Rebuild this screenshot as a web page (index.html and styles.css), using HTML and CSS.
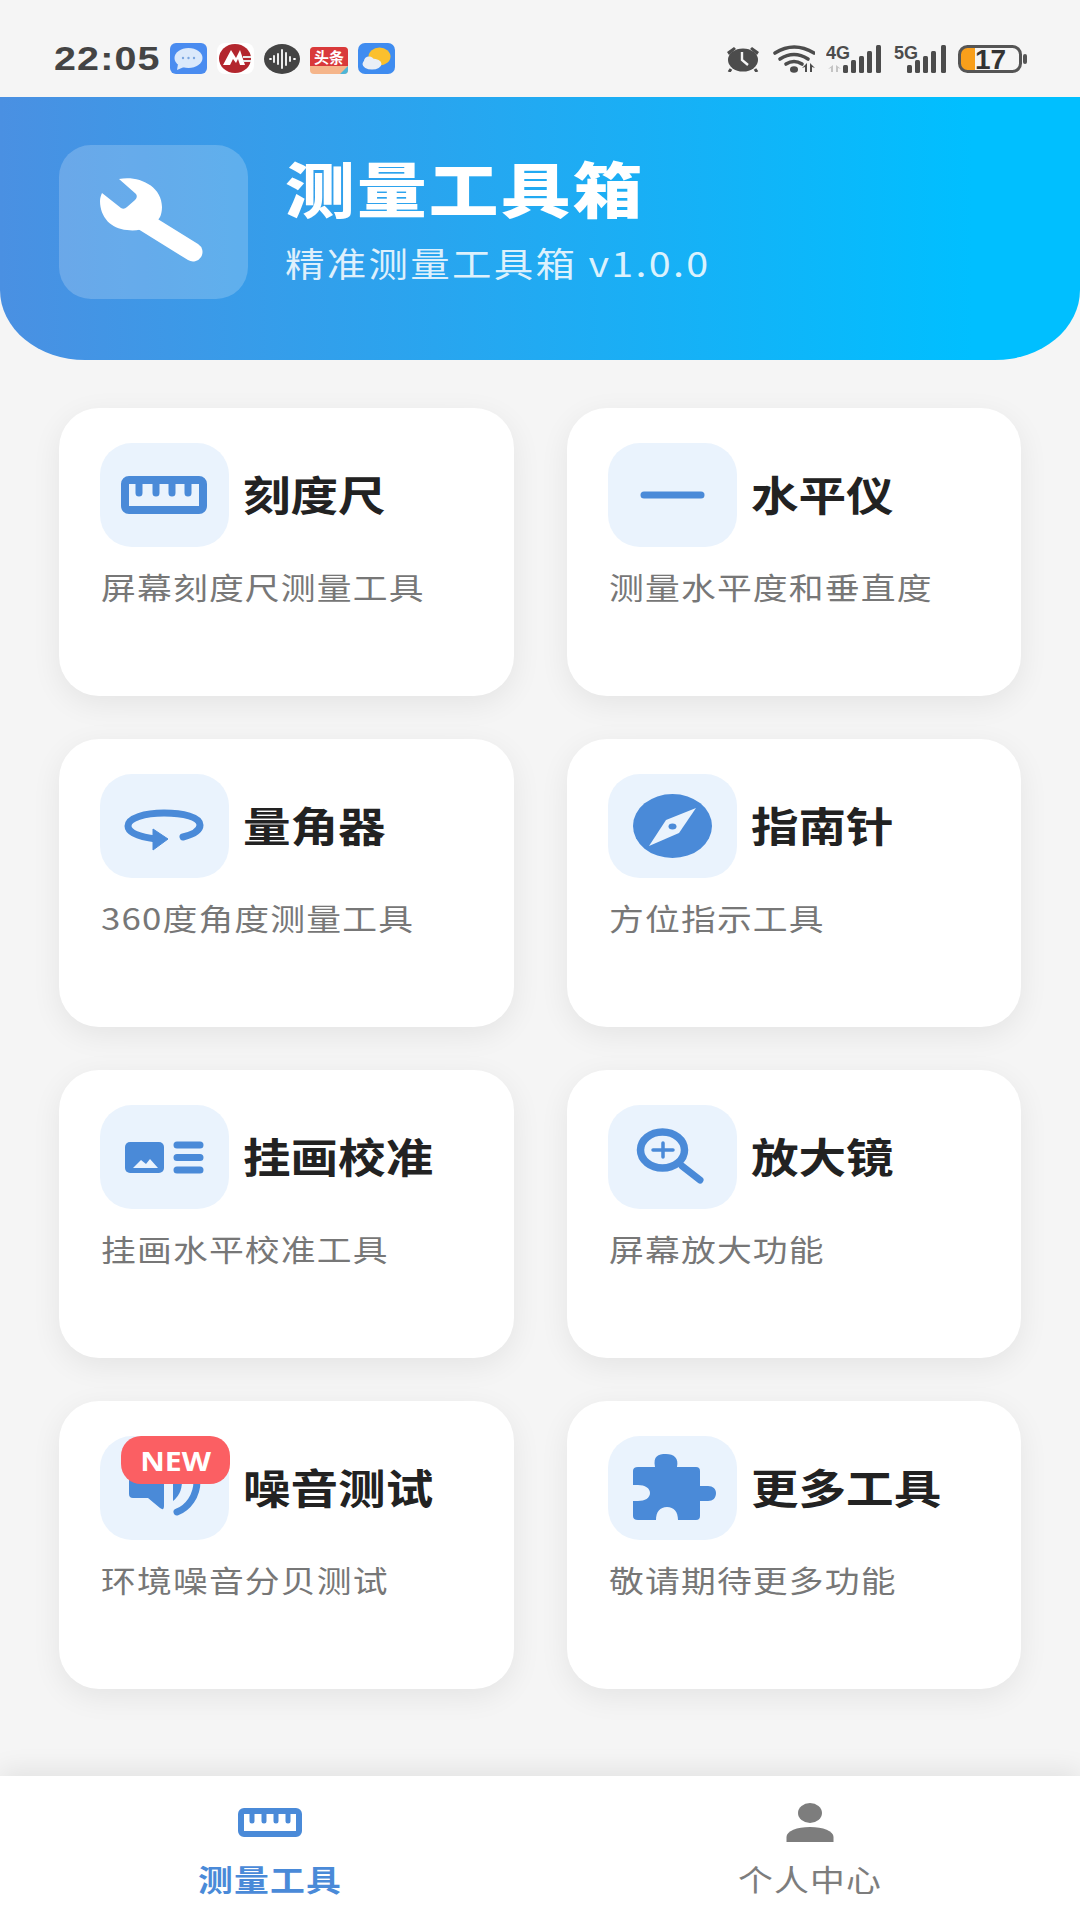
FILE: index.html
```html
<!DOCTYPE html>
<html lang="zh-CN">
<head>
    <meta charset="UTF-8">
    <meta name="viewport" content="width=device-width, initial-scale=1.0">
    <title>测量工具箱</title>
    <link rel="stylesheet" href="styles.css">
</head>
<body>
<div class="app">

    <div class="status-bar">
        <div class="status-left">
            <span class="time stretch">22:05</span>
            <div class="app-icons">
                <svg width="37" height="31" viewBox="0 0 37 31"><rect width="37" height="31" rx="6" fill="#4a8cf0"/><ellipse cx="18.5" cy="15" rx="14" ry="10" fill="#dbe9fb"/><path d="M8 21l-1 6 7-3z" fill="#dbe9fb"/><circle cx="13" cy="15" r="1.2" fill="#7ba6e0"/><circle cx="18.5" cy="15" r="1.2" fill="#7ba6e0"/><circle cx="24" cy="15" r="1.2" fill="#7ba6e0"/></svg>
                <svg width="37" height="31" viewBox="0 0 37 31"><rect width="37" height="31" rx="8" fill="#fff"/><ellipse cx="18" cy="15.5" rx="16" ry="14.5" fill="#b3262e"/><path d="M6 22L14 7l5 8 4-8 5 15h-5l-2-6-2 4-3-4-3 6z" fill="#fff"/><path d="M26 13h8v2h-8zM26 17h8v2h-8z" fill="#e8e8e8"/></svg>
                <svg width="36" height="30" viewBox="0 0 36 30"><ellipse cx="18" cy="15" rx="18" ry="15" fill="#444"/><path d="M6 15h1M10 12v6M14 10v10M18 6v18M22 9v12M26 13v4M30 15h1" stroke="#fff" stroke-width="1.8" stroke-linecap="round"/></svg>
                <svg width="38" height="31" viewBox="0 0 38 31"><rect y="4" width="38" height="27" rx="4" fill="#f5b58a"/><path d="M0 8q0-4 4-4h30q4 0 4 4v15H0z" fill="#d9393a"/><text x="19" y="20" class="toutiao">头条</text><path d="M30 31l8-8v4q0 4-4 4z" fill="#4db6d8"/></svg>
                <svg width="37" height="31" viewBox="0 0 37 31"><rect width="37" height="31" rx="7" fill="#3f8cf0"/><ellipse cx="21.5" cy="13.5" rx="11" ry="9" fill="#fbc02d"/><ellipse cx="14" cy="21" rx="9.5" ry="5.5" fill="#e9eef6"/><ellipse cx="11" cy="18" rx="5" ry="4.5" fill="#e9eef6"/></svg>
            </div>
        </div>
        <div class="status-right">
            <svg width="34" height="27" viewBox="0 0 34 27"><ellipse cx="17" cy="15" rx="15" ry="11.500" fill="#4c4c4c"/><path d="M1 7l7-5 2 2-7 6zM33 7l-7-5-2 2 7 6z" fill="#4c4c4c"/><path d="M5 24l-2 3M29 24l2 3" stroke="#4c4c4c" stroke-width="3"/><path d="M16 7v8l6 5" fill="none" stroke="#f5f5f5" stroke-width="2.4"/></svg>
            <svg width="44" height="28" viewBox="-2 0 44 28"><g fill="none" stroke="#4c4c4c" stroke-width="3.6" stroke-linecap="round"><path d="M2 8Q21-4 41 8"/><path d="M7 14Q21 5 35 14"/><path d="M13 19Q21 14 29 19"/></g><ellipse cx="21" cy="24.500" rx="4" ry="3.200" fill="#4c4c4c"/><path d="M34 18v9h-2v-5l-3 1zM37 18v9h2v-5l3 1z" fill="#4c4c4c"/></svg>
            <svg width="57" height="34" viewBox="0 -3 57 34"><text x="0" y="14" class="net-label">4G</text><path d="M7 20v7h-2v-4l-3 1zM10 20v7h2v-4l3 1z" fill="#c4c4c4"/><rect x="17" y="20" width="5" height="8" rx="1.500" fill="#4c4c4c"/><rect x="25" y="15" width="5" height="13" rx="1.500" fill="#4c4c4c"/><rect x="33" y="11" width="5" height="17" rx="1.500" fill="#4c4c4c"/><rect x="41" y="6" width="5" height="22" rx="1.500" fill="#4c4c4c"/><rect x="50" y="0" width="5" height="28" rx="1.500" fill="#4c4c4c"/></svg>
            <svg width="53" height="34" viewBox="0 -3 53 34"><text x="0" y="14" class="net-label">5G</text><rect x="13" y="20" width="5" height="8" rx="1.500" fill="#4c4c4c"/><rect x="21" y="15" width="5" height="13" rx="1.500" fill="#4c4c4c"/><rect x="29" y="11" width="5" height="17" rx="1.500" fill="#4c4c4c"/><rect x="37" y="6" width="5" height="22" rx="1.500" fill="#4c4c4c"/><rect x="47" y="0" width="5" height="28" rx="1.500" fill="#4c4c4c"/></svg>
            <svg width="70" height="28" viewBox="0 0 70 28"><path d="M17 2H10Q2 2 2 10v8q0 8 8 8h7z" fill="#f99f1b"/><rect x="1.500" y="1.500" width="61" height="25" rx="8" fill="none" stroke="#555" stroke-width="3"/><text x="17" y="23.500" class="battery-num">17</text><rect x="65" y="9" width="4" height="10" rx="2" fill="#555"/></svg>
        </div>
    </div>

    <header class="header">
        <div class="header-icon">
            <svg width="189" height="154" viewBox="0 0 189 154"><path d="M60 34C78 30 103 40 103 62C103 66 102 70 101 72C96 82 80 87 68 85C52 84 41 72 41 56C41 53 42 50 43 48L62 63Q65 65 68 62L76 55Q79 52 77 49Z" fill="#fff"/><path d="M84 76L134 107" stroke="#fff" stroke-width="19" stroke-linecap="round"/></svg>
        </div>
        <div class="header-text">
            <h1 class="stretch">测量工具箱</h1>
            <p class="stretch">精准测量工具箱 v1.0.0</p>
        </div>
    </header>

    <main class="grid">
        <div class="card">
            <div class="card-head">
                <div class="tool-icon">
                    <svg width="129" height="104" viewBox="0 0 129 104"><rect x="25" y="37" width="78" height="30" rx="4" fill="none" stroke="#4a8ad8" stroke-width="8"/><path d="M39 38v12M56 38v12M72 38v12M88 38v12" stroke="#4a8ad8" stroke-width="7" stroke-linecap="round"/></svg>
                </div>
                <span class="card-title stretch">刻度尺</span>
            </div>
            <p class="card-desc stretch">屏幕刻度尺测量工具</p>
        </div>

        <div class="card">
            <div class="card-head">
                <div class="tool-icon">
                    <svg width="129" height="104" viewBox="0 0 129 104"><path d="M36 52H93" stroke="#4a8ad8" stroke-width="7" stroke-linecap="round"/></svg>
                </div>
                <span class="card-title stretch">水平仪</span>
            </div>
            <p class="card-desc stretch">测量水平度和垂直度</p>
        </div>

        <div class="card">
            <div class="card-head">
                <div class="tool-icon">
                    <svg width="129" height="104" viewBox="0 0 129 104"><path d="M83 63C95 60 100 56 100 51C100 43 83 39 64 39C45 39 28 44 28 52C28 59 40 63 56 65" fill="none" stroke="#4a8ad8" stroke-width="7" stroke-linecap="round"/><path d="M53 55L68 65L53 76Z" fill="#4a8ad8" stroke="#4a8ad8" stroke-width="1" stroke-linejoin="round"/></svg>
                </div>
                <span class="card-title stretch">量角器</span>
            </div>
            <p class="card-desc stretch">360度角度测量工具</p>
        </div>

        <div class="card">
            <div class="card-head">
                <div class="tool-icon">
                    <svg width="129" height="104" viewBox="0 0 129 104"><ellipse cx="64.500" cy="52" rx="39.500" ry="32" fill="#4a8ad8"/><path d="M88 34L71 59L41 72L58 46Z" fill="#eaf3fd"/><ellipse cx="64.500" cy="52.500" rx="4" ry="3" fill="#4a8ad8"/></svg>
                </div>
                <span class="card-title stretch">指南针</span>
            </div>
            <p class="card-desc stretch">方位指示工具</p>
        </div>

        <div class="card">
            <div class="card-head">
                <div class="tool-icon">
                    <svg width="129" height="104" viewBox="0 0 129 104"><rect x="25" y="37" width="39" height="31" rx="5" fill="#4a8ad8"/><path d="M33 63L41 55L46 59L50 54L58 63Z" fill="#eaf3fd"/><path d="M77 40H100M77 52.500H100M77 65H100" stroke="#4a8ad8" stroke-width="7" stroke-linecap="round"/></svg>
                </div>
                <span class="card-title stretch">挂画校准</span>
            </div>
            <p class="card-desc stretch">挂画水平校准工具</p>
        </div>

        <div class="card">
            <div class="card-head">
                <div class="tool-icon">
                    <svg width="129" height="104" viewBox="0 0 129 104"><ellipse cx="54.500" cy="45" rx="22" ry="18" fill="none" stroke="#4a8ad8" stroke-width="7.500"/><path d="M45 45H65M55 38V52" stroke="#4a8ad8" stroke-width="3.500" stroke-linecap="round"/><path d="M74 61L92 75" stroke="#4a8ad8" stroke-width="7" stroke-linecap="round"/></svg>
                </div>
                <span class="card-title stretch">放大镜</span>
            </div>
            <p class="card-desc stretch">屏幕放大功能</p>
        </div>

        <div class="card">
            <div class="card-head">
                <div class="tool-icon">
                    <svg width="129" height="104" viewBox="0 0 129 104"><path d="M29 30V58Q29 62 33 62H48L60 72Q64 75 64 70V20Z" fill="#4a8ad8"/><path d="M73 45H82C82 55 78 61 73 65Z" fill="#4a8ad8"/><path d="M97 45C97 60 88 72 77 76" fill="none" stroke="#4a8ad8" stroke-width="7" stroke-linecap="round"/></svg>
                    <span class="badge"><span class="badge-text">NEW</span></span>
                </div>
                <span class="card-title stretch">噪音测试</span>
            </div>
            <p class="card-desc stretch">环境噪音分贝测试</p>
        </div>

        <div class="card">
            <div class="card-head">
                <div class="tool-icon">
                    <svg width="129" height="104" viewBox="0 0 129 104"><path d="M30 31H47C45 20 50 18 58 18C66 18 71 22 69 31H88Q92 31 92 35V50H100C105 50 108 53 108 57C108 62 105 65 100 65H92V80Q92 84 88 84H70C70 76 66 71 59 71C52 71 48 76 48 84H30Q25 84 25 80V65H30C37 65 42 62 42 57C42 52 37 49 30 49H25V35Q25 31 30 31Z" fill="#4a8ad8"/></svg>
                </div>
                <span class="card-title stretch">更多工具</span>
            </div>
            <p class="card-desc stretch">敬请期待更多功能</p>
        </div>
    </main>

    <nav class="tabbar">
        <div class="tab active">
            <svg width="64" height="40" viewBox="0 0 64 40"><rect x="3" y="8" width="58" height="23" rx="3" fill="none" stroke="#4a8ad8" stroke-width="6"/><path d="M14 9v9M26 9v9M38 9v9M50 9v9" stroke="#4a8ad8" stroke-width="5" stroke-linecap="round"/></svg>
            <span class="tab-label">测量工具</span>
        </div>
        <div class="tab">
            <svg width="64" height="40" viewBox="0 0 64 40"><ellipse cx="32" cy="10" rx="12" ry="10" fill="#7d7d7d"/><path d="M8.500 39V34C8.500 28 19 24 32 24C45 24 55.500 28 55.500 34V39Z" fill="#7d7d7d"/></svg>
            <span class="tab-label">个人中心</span>
        </div>
    </nav>

</div>
</body>
</html>
```

FILE: styles.css
```css
body {
    margin: 0;
    background-color: #f5f5f5;
    font-family: "Noto Sans CJK SC", "Noto Sans", sans-serif;
}

.app {
    width: 1080px;
    height: 1920px;
    display: flex;
    flex-direction: column;
    overflow: hidden;
}

/* the whole screenshot is a little wider than tall, text follows it */
.stretch {
    display: block;
    width: max-content;
    transform: scaleX(1.16);
    transform-origin: left center;
}

.status-bar {
    height: 97px;
    flex-shrink: 0;
    display: flex;
    align-items: center;
    justify-content: space-between;
    padding: 20px 52px 0 54px;
    box-sizing: border-box;
}

.status-left {
    display: flex;
    align-items: center;
}

.time {
    width: 116px;
    font-family: "Liberation Sans", sans-serif;
    font-size: 34px;
    font-weight: bold;
    letter-spacing: 1px;
    color: #444;
}

.app-icons {
    display: flex;
    align-items: center;
    gap: 10px;
}

.app-icons svg,
.status-right svg {
    display: block;
}

.status-right {
    display: flex;
    align-items: center;
    gap: 11px;
}

.toutiao {
    font-size: 15px;
    font-weight: bold;
    fill: #fff;
    text-anchor: middle;
}

.net-label {
    font-family: "Liberation Sans", sans-serif;
    font-size: 18px;
    font-weight: bold;
    fill: #4c4c4c;
}

.battery-num {
    font-family: "Liberation Sans", sans-serif;
    font-size: 28px;
    font-weight: bold;
    fill: #333;
}

.header {
    height: 263px;
    flex-shrink: 0;
    display: flex;
    align-items: center;
    gap: 37px;
    padding: 0 59px 14px;
    box-sizing: border-box;
    background: linear-gradient(90deg, #4a90e2 0%, #00bfff 90%);
    border-radius: 0 0 85px 85px / 0 0 70px 70px;
}

.header-icon {
    width: 189px;
    height: 154px;
    border-radius: 32px;
    background-color: rgba(255, 255, 255, 0.2);
}

.header-icon svg {
    display: block;
}

.header-text {
    margin-bottom: 10px;
}

.header-text h1 {
    margin: 0;
    font-size: 60px;
    line-height: 74px;
    font-weight: 900;
    letter-spacing: 2px;
    color: #fff;
}

.header-text p {
    margin: 18px 0 0;
    font-size: 34px;
    line-height: 42px;
    letter-spacing: 2px;
    color: rgba(255, 255, 255, 0.85);
}

.grid {
    display: grid;
    grid-template-columns: 1fr 1fr;
    grid-auto-rows: 288px;
    gap: 43px 53px;
    padding: 48px 59px 0;
}

.card {
    background-color: #fff;
    border-radius: 40px;
    padding: 35px 41px;
    box-shadow: 0 8px 30px rgba(0, 0, 0, 0.07);
}

.card-head {
    display: flex;
    align-items: center;
    gap: 14px;
}

.tool-icon {
    position: relative;
    width: 129px;
    height: 104px;
    flex-shrink: 0;
    border-radius: 32px;
    background-color: #eaf3fd;
}

.tool-icon svg {
    display: block;
}

.card-title {
    margin-bottom: 4px;
    font-size: 41px;
    line-height: 50px;
    font-weight: bold;
    color: #222;
}

.card-desc {
    margin: 21px 0 0 1px;
    font-size: 30px;
    line-height: 36px;
    letter-spacing: 1px;
    color: #777;
}

.badge {
    position: absolute;
    top: 0;
    right: -1px;
    width: 109px;
    height: 48px;
    border-radius: 20px;
    background-color: #fb5f63;
    color: #fff;
    display: flex;
    align-items: center;
    justify-content: center;
    font-family: "Open Sans", sans-serif;
    font-size: 27px;
    font-weight: 700;
}

.badge-text {
    transform: scaleX(1.12);
}

.tabbar {
    margin-top: auto;
    height: 144px;
    flex-shrink: 0;
    display: flex;
    background-color: #fff;
    box-shadow: 0 -6px 24px rgba(0, 0, 0, 0.08);
}

.tab {
    flex: 1;
    display: flex;
    flex-direction: column;
    align-items: center;
    padding-top: 27px;
    gap: 16px;
    color: #7d7d7d;
}

.tab svg {
    display: block;
}

.tab-label {
    font-size: 30px;
    line-height: 38px;
    letter-spacing: 1px;
    transform: scaleX(1.16);
}

.tab.active {
    color: #4a8ad8;
}

.tab.active .tab-label {
    font-weight: bold;
}
```
